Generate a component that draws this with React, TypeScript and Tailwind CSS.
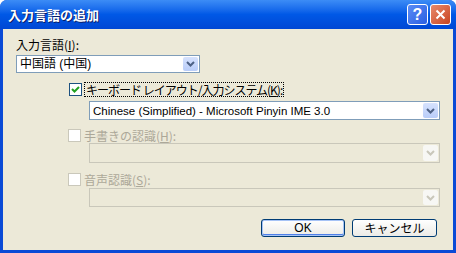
import React from 'react';

const jp = { fontFamily: '"Noto Sans CJK JP", "Liberation Sans", sans-serif' };
const ui = { fontFamily: '"Liberation Sans", "Noto Sans CJK JP", sans-serif' };

const Arrow: React.FC<{ disabled?: boolean }> = ({ disabled }) => (
  <svg width="9" height="6" viewBox="0 0 9 6">
    <path d="M1 1 L4.5 4.5 L8 1" fill="none" stroke={disabled ? '#c9c7ba' : '#4d6185'} strokeWidth="2" />
  </svg>
);

const Combo: React.FC<{ className: string; text?: string; disabled?: boolean; small?: boolean }> = ({
  className,
  text,
  disabled,
  small
}) => (
  <div
    className={`flex items-center border ${disabled ? 'border-[#c9c7ba] bg-[#ece9d8]' : 'border-[#7f9db9] bg-white'} ${className}`}
  >
    <div
      className={`flex-1 pl-[3px] ${small ? 'text-[11.5px]' : 'text-[12px]'} leading-[14px] text-black whitespace-nowrap overflow-hidden`}
      style={ui}
    >
      {text}
    </div>
    <div
      className={`w-[15px] h-[calc(100%-2px)] mr-px flex items-center justify-center rounded-[2px] ${
        disabled ? 'bg-[#f7f7f4]' : 'bg-gradient-to-b from-[#d6e2fd] to-[#b9cdf9]'
      }`}
    >
      <Arrow disabled={disabled} />
    </div>
  </div>
);

const Check: React.FC<{ checked?: boolean; disabled?: boolean }> = ({ checked, disabled }) => (
  <div
    className={`w-[13px] h-[13px] border flex items-center justify-center ${
      disabled ? 'border-[#cac8bb] bg-white' : 'border-[#1c5180] bg-white'
    }`}
  >
    {checked && (
      <svg width="9" height="9" viewBox="0 0 9 9">
        <path d="M1 4 L3.5 6.5 L8 2" fill="none" stroke="#21a121" strokeWidth="2" />
      </svg>
    )}
  </div>
);

export default function App() {
  return (
    <div className="w-[456px] h-[253px] flex flex-col bg-[#0a4ad6] rounded-t-[7px] overflow-hidden">
      {/* title bar */}
      <div className="h-[29px] flex items-center pl-[8px] pr-[5px] bg-gradient-to-b from-[#3c8cf6] via-[#0058e6] to-[#0047d4]">
        <div
          className="flex-1 text-white text-[13px] font-bold leading-[16px] [text-shadow:1px_1px_0_#0a1e6a]"
          style={jp}
        >
          入力言語の追加
        </div>
        <div className="flex gap-[2px]">
          <div className="w-[21px] h-[21px] rounded-[3px] border border-white bg-gradient-to-br from-[#5b8cf5] to-[#2a5ee2] flex items-center justify-center">
            <span className="text-white text-[16px] font-bold leading-none" style={ui}>?</span>
          </div>
          <div className="w-[21px] h-[21px] rounded-[3px] border border-white bg-gradient-to-br from-[#e8896a] to-[#c8431d] flex items-center justify-center">
            <svg width="11" height="11" viewBox="0 0 11 11">
              <path d="M1.5 1.5 L9.5 9.5 M9.5 1.5 L1.5 9.5" stroke="white" strokeWidth="2" />
            </svg>
          </div>
        </div>
      </div>

      {/* client */}
      <div className="flex-1 mx-[3px] mb-[3px] bg-[#ece9d8] flex flex-col pt-[9px] pl-[13px]" style={jp}>
        <div className="text-[12px] leading-[14px] text-black">
          入力言語(<span className="underline">I</span>):
        </div>
        <Combo className="mt-[3px] w-[184px] h-[18px]" text="中国語 (中国)" />

        <div className="mt-[9px] ml-[53px] h-[15px] flex items-center gap-[2px]">
          <Check checked />
          <div className="text-[12px] leading-[13px] text-black border border-dotted border-black px-px tracking-[-1px]">
            キーボード レイアウト/入力システム(<span className="underline">K</span>):
          </div>
        </div>
        <Combo
          className="mt-[4px] ml-[73px] w-[351px] h-[19px]"
          text="Chinese (Simplified) - Microsoft Pinyin IME 3.0"
          small
        />

        <div className="mt-[8px] ml-[52px] h-[15px] flex items-center gap-[3px]">
          <Check disabled />
          <div className="text-[12px] leading-[14px] text-[#aca899]">
            手書きの認識(<span className="underline">H</span>):
          </div>
        </div>
        <Combo className="mt-[0px] ml-[73px] w-[351px] h-[20px]" disabled />

        <div className="mt-[9px] ml-[52px] h-[15px] flex items-center gap-[3px]">
          <Check disabled />
          <div className="text-[12px] leading-[14px] text-[#aca899]">
            音声認識(<span className="underline">S</span>):
          </div>
        </div>
        <Combo className="mt-[1px] ml-[73px] w-[351px] h-[19px]" disabled />

        <div className="mt-[12px] pr-[16px] flex justify-end gap-[7px]">
          <button
            className="w-[84px] h-[18px] rounded-[3px] border border-[#003c74] bg-gradient-to-b from-white to-[#ecebe6] shadow-[inset_0_0_0_1px_#a6c3f6,inset_0_-1px_0_1px_#4f80e8] text-[12px] leading-[14px] text-black"
            style={ui}
          >
            OK
          </button>
          <button className="w-[85px] h-[18px] rounded-[3px] border border-[#003c74] bg-gradient-to-b from-white to-[#ecebe6] text-[12px] leading-[14px] text-black">
            キャンセル
          </button>
        </div>
      </div>
    </div>
  );
}
